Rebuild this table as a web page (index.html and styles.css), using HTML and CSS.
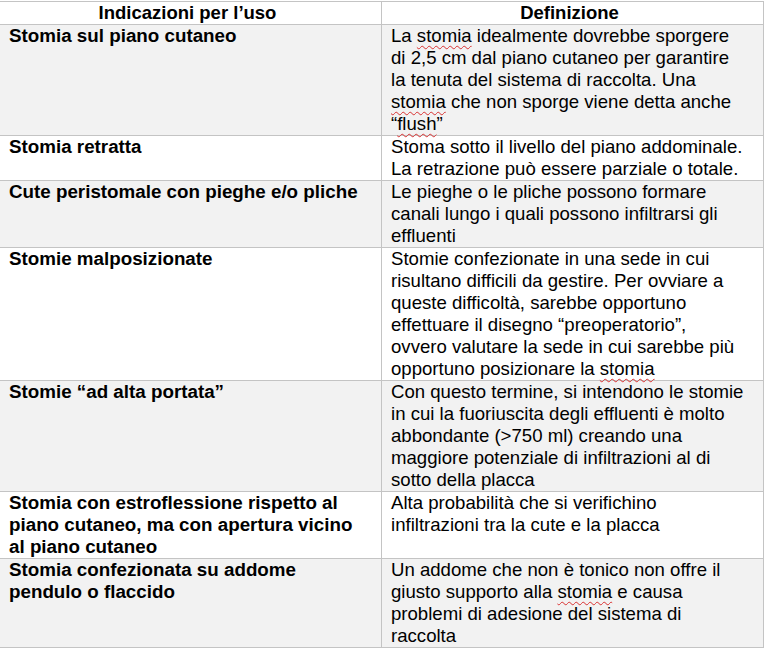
FILE: index.html
```html
<!DOCTYPE html>
<html lang="it">
  <head>
    <meta charset="UTF-8" />
    <meta name="viewport" content="width=device-width, initial-scale=1.0" />
    <title>Indicazioni per l'uso</title>
    <link rel="stylesheet" href="styles.css">
  </head>
  <body>
    <table class="uso-table">
      <thead>
        <tr>
          <th>Indicazioni per l’uso</th>
          <th>Definizione</th>
        </tr>
      </thead>
      <tbody>
        <tr class="shade">
          <td class="ind">Stomia sul piano cutaneo</td>
          <td class="def">La <span class="sp">stomia</span> idealmente dovrebbe sporgere di 2,5 cm dal piano cutaneo per garantire la tenuta del sistema di raccolta. Una <span class="sp">stomia</span> che non sporge viene detta anche “<span class="sp">flush</span>”</td>
        </tr>
        <tr>
          <td class="ind">Stomia retratta</td>
          <td class="def">Stoma sotto il livello del piano addominale. La retrazione può essere parziale o totale.</td>
        </tr>
        <tr class="shade">
          <td class="ind">Cute peristomale con pieghe e/o pliche</td>
          <td class="def">Le pieghe o le pliche possono formare canali lungo i quali possono infiltrarsi gli effluenti</td>
        </tr>
        <tr>
          <td class="ind">Stomie malposizionate</td>
          <td class="def">Stomie confezionate in una sede in cui risultano difficili da gestire. Per ovviare a queste difficoltà, sarebbe opportuno effettuare il disegno “preoperatorio”, ovvero valutare la sede in cui sarebbe più opportuno posizionare la <span class="sp">stomia</span></td>
        </tr>
        <tr class="shade">
          <td class="ind">Stomie “ad alta portata”</td>
          <td class="def">Con questo termine, si intendono le stomie in cui la fuoriuscita degli effluenti è molto abbondante (&gt;750 ml) creando una maggiore potenziale di infiltrazioni al di sotto della placca</td>
        </tr>
        <tr>
          <td class="ind">Stomia con estroflessione rispetto al piano cutaneo, ma con apertura vicino al piano cutaneo</td>
          <td class="def">Alta probabilità che si verifichino infiltrazioni tra la cute e la placca</td>
        </tr>
        <tr class="shade">
          <td class="ind">Stomia confezionata su addome pendulo o flaccido</td>
          <td class="def">Un addome che non è tonico non offre il giusto supporto alla <span class="sp">stomia</span> e causa problemi di adesione del sistema di raccolta</td>
        </tr>
      </tbody>
    </table>
  </body>
</html>
```

FILE: styles.css
```css
body {
  margin: 0;
  padding-top: 1px;
  background: #fff;
  font-family: "Liberation Sans", Arial, sans-serif;
  color: #000;
}
.uso-table {
  width: 764px;
  border-collapse: collapse;
  table-layout: fixed;
}
.uso-table th,
.uso-table td {
  border: 1px solid #c4c4c4;
  vertical-align: top;
  line-height: 22px;
  padding: 0 15px 0 9px;
  text-align: left;
}
.uso-table th:first-child,
.uso-table td:first-child {
  border-left: none;
  width: 357px;
}
.uso-table th {
  font-size: 18.5px;
  font-weight: bold;
  text-align: center;
  background: #fff;
}
.shade td {
  background: #f2f2f2;
}
.ind {
  font-size: 18.8px;
  font-weight: bold;
}
.uso-table .def {
  font-size: 18.6px;
  padding-right: 19px;
}
.sp {
  text-decoration: underline wavy #d83030;
  text-decoration-thickness: 1px;
  text-underline-offset: 3px;
}
```
